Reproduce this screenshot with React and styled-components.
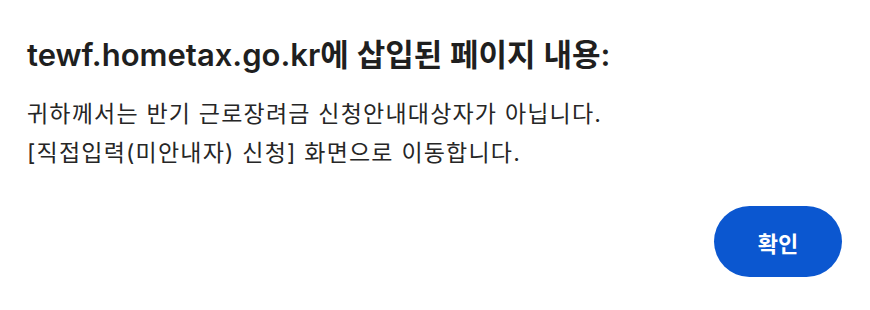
import React from 'react';
import styled, { createGlobalStyle } from 'styled-components';

const GlobalStyle = createGlobalStyle`
  html, body {
    margin: 0;
    padding: 0;
    background: #ffffff;
  }
  body {
    font-family: Inter, "Noto Sans CJK KR", sans-serif;
    color: #222222;
  }
`;

const Dialog = styled.div`
  width: 870px;
  height: 310px;
  box-sizing: border-box;
  padding: 36px 28px 0 27px;
  display: flex;
  flex-direction: column;
`;

const Title = styled.h1`
  margin: 0;
  font-size: 31px;
  font-weight: 600;
  line-height: 38px;
  color: #1f1f1f;
`;

const Message = styled.p`
  margin: 21px 0 0;
  font-size: 23px;
  line-height: 39px;
  font-weight: 400;
  color: #262626;
  letter-spacing: 1.2px;
`;

const Footer = styled.div`
  display: flex;
  justify-content: flex-end;
  margin-top: 33px;
`;

const ConfirmButton = styled.button`
  width: 128px;
  height: 71px;
  border: none;
  border-radius: 36px;
  background: #0b57d0;
  color: #ffffff;
  font-family: Inter, "Noto Sans CJK KR", sans-serif;
  font-size: 22px;
  font-weight: 700;
  cursor: pointer;
`;

export default function App() {
  return (
    <>
      <GlobalStyle />
      <Dialog>
        <Title>tewf.hometax.go.kr에 삽입된 페이지 내용:</Title>
        <Message>
          귀하께서는 반기 근로장려금 신청안내대상자가 아닙니다.
          <br />
          [직접입력(미안내자) 신청] 화면으로 이동합니다.
        </Message>
        <Footer>
          <ConfirmButton>확인</ConfirmButton>
        </Footer>
      </Dialog>
    </>
  );
}
